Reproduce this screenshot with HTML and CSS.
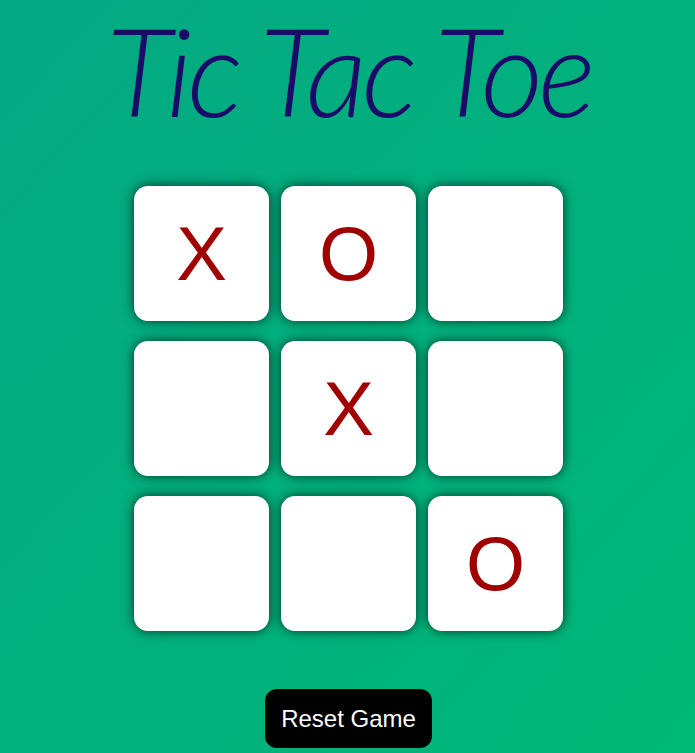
FILE: index.html
```html
<!DOCTYPE html>
<html>
<head>
<meta charset="utf-8">
<title>Tic Tac Toe</title>
<link rel="stylesheet" href="styles.css">
</head>
<body>
<main class="game">
  <h1 class="title">Tic Tac Toe</h1>
  <div class="board">
    <div class="cell">X</div>
    <div class="cell">O</div>
    <div class="cell"></div>
    <div class="cell"></div>
    <div class="cell">X</div>
    <div class="cell"></div>
    <div class="cell"></div>
    <div class="cell"></div>
    <div class="cell">O</div>
  </div>
  <button class="reset">Reset Game</button>
</main>
</body>
</html>
```

FILE: styles.css
```css
html, body {
  margin: 0;
  padding: 0;
  height: 100%;
}
body {
  background: linear-gradient(to bottom right, #03a883, #00b877);
  font-family: "Liberation Sans", Arial, sans-serif;
  overflow: hidden;
}
.game {
  display: flex;
  flex-direction: column;
  align-items: center;
  padding-left: 2px;
}
.title {
  margin: -3px 0 0;
  padding: 0 8px;
  font-family: Lato, "Open Sans", sans-serif;
  font-weight: 300;
  font-style: italic;
  font-size: 122px;
  line-height: 146px;
  color: #1a0b6a;
  letter-spacing: -5px;
}
.board {
  margin-top: 43px;
  display: grid;
  grid-template-columns: repeat(3, 135px);
  grid-auto-rows: 135px;
  column-gap: 12px;
  row-gap: 20px;
}
.cell {
  background: #fff;
  border-radius: 14px;
  box-shadow: 0 0 12px rgba(0, 0, 0, 0.7);
  display: flex;
  align-items: center;
  justify-content: center;
  font-size: 76px;
  color: #a00000;
}
.reset {
  margin-top: 58px;
  background: #000;
  color: #fff;
  border: none;
  border-radius: 12px;
  font-family: "Liberation Sans", Arial, sans-serif;
  font-size: 24px;
  padding: 16px 16px;
  line-height: 27px;
}
```
